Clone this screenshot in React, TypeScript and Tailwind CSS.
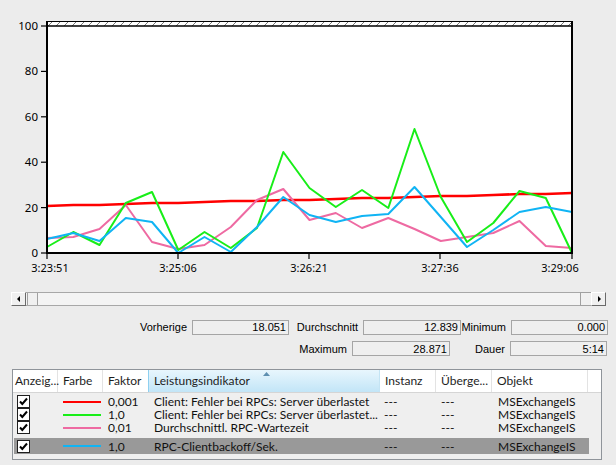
import React from 'react';

const X0 = 47;
const STEP = 26.25;

const green = [247, 232, 245, 203, 192, 250, 232, 248, 228, 152, 188, 207, 190, 208, 129, 197, 242, 223, 191, 198, 253];
const blue = [239, 233, 241, 218, 222, 253, 237, 252, 227, 197, 215, 222, 216, 214, 187, 217, 247, 230, 212, 207, 212];
const pink = [238, 237, 229, 205, 242, 249, 245, 227, 200, 189, 220, 213, 228, 218, 229, 241, 237, 233, 221, 246, 248];
const red = green.map((_, k) => Math.round(206 - (13 * k) / 20));

const pts = (ys: number[]) => ys.map((y, k) => `${(X0 + k * STEP).toFixed(1)},${y}`).join(' ');

const yTicks = [
  { v: '100', y: 26 },
  { v: '80', y: 71.4 },
  { v: '60', y: 116.8 },
  { v: '40', y: 162.2 },
  { v: '20', y: 207.6 },
  { v: '0', y: 253 },
];

const xTicks = [
  { t: '3:23:51', x: 47, lx: 50 },
  { t: '3:25:06', x: 178, lx: 178 },
  { t: '3:26:21', x: 309, lx: 309 },
  { t: '3:27:36', x: 440, lx: 440 },
  { t: '3:29:06', x: 572, lx: 560 },
];

const Chart = () => (
  <svg width="616" height="284" className="block" style={{ fontFamily: '"Noto Sans", sans-serif' }}>
    <defs>
      <pattern id="hatch" width="8" height="5" patternUnits="userSpaceOnUse" x="47" y="21">
        <line x1="1" y1="5" x2="6" y2="0" stroke="#555" strokeWidth="0.8" />
      </pattern>
    </defs>
    <rect x="47" y="21" width="525" height="232" fill="#fff" />
    <rect x="47" y="21" width="525" height="5" fill="url(#hatch)" />
    <line x1="47" y1="21.5" x2="572" y2="21.5" stroke="#000" strokeWidth="1" />
    <line x1="47" y1="26" x2="572" y2="26" stroke="#000" strokeWidth="1.5" />

    {yTicks.map((t) => (
      <g key={t.v}>
        <line x1="41" y1={t.y} x2="47" y2={t.y} stroke="#000" strokeWidth="1.2" />
        <text x="38" y={t.y + 4} textAnchor="end" fontSize="11.5" fill="#000">
          {t.v}
        </text>
      </g>
    ))}
    {xTicks.map((t) => (
      <g key={t.t}>
        <line x1={t.x} y1="253" x2={t.x} y2="259" stroke="#000" strokeWidth="1.2" />
        <text x={t.lx} y="272" textAnchor="middle" fontSize="11" fill="#000">
          {t.t}
        </text>
      </g>
    ))}

    <polyline points={pts(red)} fill="none" stroke="#ff0000" strokeWidth="2.6" />
    <polyline points={pts(pink)} fill="none" stroke="#ee6aa2" strokeWidth="2" strokeLinejoin="round" />
    <polyline points={pts(green)} fill="none" stroke="#18ee18" strokeWidth="2" strokeLinejoin="round" />
    <polyline points={pts(blue)} fill="none" stroke="#10b4f4" strokeWidth="2" strokeLinejoin="round" />

    <line x1="47" y1="21" x2="47" y2="254" stroke="#000" strokeWidth="2" />
    <line x1="572" y1="21" x2="572" y2="254" stroke="#000" strokeWidth="2" />
    <line x1="46" y1="253" x2="573" y2="253" stroke="#000" strokeWidth="2" />
  </svg>
);

const ScrollBtn = ({ dir }: { dir: 'l' | 'r' }) => (
  <div className="flex h-[14px] w-[15px] items-center justify-center border-t border-l border-t-white border-l-white border-b border-r border-b-[#6a6a6a] border-r-[#6a6a6a] bg-[#f0f0f0]">
    <svg width="4" height="6">
      {dir === 'l' ? <polygon points="3,0 3,6 0,3" fill="#000" /> : <polygon points="1,0 1,6 4,3" fill="#000" />}
    </svg>
  </div>
);

const Scrollbar = () => (
  <div className="mx-[11px] flex h-[14px] w-[595px]">
    <ScrollBtn dir="l" />
    <div className="flex flex-1 border-y border-[#a8a8a8] bg-[#f4f4f4]">
      <div className="ml-[1px] h-full w-[11px] border-r border-l border-[#a0a0a0] bg-[#f0f0f0]" />
    </div>
    <div className="flex h-[14px] w-[11px] border-y border-l border-[#a0a0a0] bg-[#f0f0f0]" />
    <ScrollBtn dir="r" />
  </div>
);

const StatBox = ({ value, w }: { value: string; w: string }) => (
  <div className={`flex h-[15px] items-center justify-end border border-[#a5a5a5] bg-[#efefef] pr-[2px] ${w}`}>
    {value}
  </div>
);

const Stats = () => (
  <div className="mt-[13px] flex flex-col gap-[5px] text-[11px] text-black" style={{ fontFamily: '"Liberation Sans", Arial, sans-serif' }}>
    <div className="flex items-center">
      <div className="w-[187px] text-right">Vorherige</div>
      <div className="w-[5px]" />
      <StatBox value="18.051" w="w-[97px]" />
      <div className="w-[69px] text-right">Durchschnitt</div>
      <div className="w-[5px]" />
      <StatBox value="12.839" w="w-[98px]" />
      <div className="w-[45px] text-right">Minimum</div>
      <div className="w-[5px]" />
      <StatBox value="0.000" w="w-[97px]" />
    </div>
    <div className="flex items-center">
      <div className="w-[347px] text-right">Maximum</div>
      <div className="w-[5px]" />
      <StatBox value="28.871" w="w-[98px]" />
      <div className="w-[55px] text-right">Dauer</div>
      <div className="w-[5px]" />
      <StatBox value="5:14" w="w-[97px]" />
    </div>
  </div>
);

const Check = () => (
  <div className="flex h-[13px] w-[13px] items-center justify-center border border-[#1f1f1f] bg-white">
    <svg width="11" height="11" viewBox="0 0 11 11">
      <path d="M2 5.5 L4.3 8 L9 2.5" fill="none" stroke="#000" strokeWidth="2" />
    </svg>
  </div>
);

const rows = [
  { color: '#ff0000', f: '0,001', name: 'Client: Fehler bei RPCs: Server überlastet', sel: false },
  { color: '#18ee18', f: '1,0', name: 'Client: Fehler bei RPCs: Server überlastet...', sel: false },
  { color: '#ee6aa2', f: '0,01', name: 'Durchschnittl. RPC-Wartezeit', sel: false },
  { color: '#10b4f4', f: '1,0', name: 'RPC-Clientbackoff/Sek.', sel: true },
];

const Table = () => (
  <div className="mx-[12px] mt-[12px] h-[91px] w-[590px] border border-[#8f949a] bg-[#efefef] text-[12px] text-[#111]" style={{ fontFamily: 'Lato, "Noto Sans", sans-serif' }}>
    <div className="flex h-[23px] border-b border-[#d5d5d5] bg-white text-[#1e1e1e]">
      <div className="flex w-[45px] items-center border-r border-[#e3e3e3] pl-[2px]">Anzeig...</div>
      <div className="flex w-[45px] items-center border-r border-[#e3e3e3] pl-[5px]">Farbe</div>
      <div className="flex w-[45px] items-center pl-[5px]">Faktor</div>
      <div className="relative flex w-[232px] items-center border-l border-r border-l-[#8fd0f0] border-r-[#c4e4f4] bg-gradient-to-b from-[#e8f6fd] to-[#c2e5f7] pl-[5px]">
        Leistungsindikator
        <svg className="absolute left-[114px] top-[2px]" width="7" height="4">
          <polygon points="0,4 3.5,0 7,4" fill="#5e8fb0" />
        </svg>
      </div>
      <div className="flex w-[56px] items-center border-r border-[#e3e3e3] pl-[5px]">Instanz</div>
      <div className="flex w-[56px] items-center border-r border-[#e3e3e3] pl-[5px]">Überge...</div>
      <div className="flex w-[96px] items-center border-r border-[#e3e3e3] pl-[5px]">Objekt</div>
    </div>
    <div className="mt-[2px] flex flex-col leading-[13px]">
      {rows.map((r) => (
        <div
          key={r.name}
          className={`flex w-[575px] items-center ${r.sel ? 'mt-[4px] ml-[1px] h-[16px] bg-[#999999]' : 'h-[13px]'}`}
        >
          <div className={`flex h-full items-center ${r.sel ? 'w-[44px] pl-[3px]' : 'w-[45px] pl-[4px]'}`}>
            <Check />
          </div>
          <div className="flex w-[45px] items-center pl-[5px]">
            <div className="h-[2px] w-[38px]" style={{ backgroundColor: r.color }} />
          </div>
          <div className="w-[45px] pl-[5px]">{r.f}</div>
          <div className="w-[232px] truncate pl-[6px]">{r.name}</div>
          <div className="w-[56px] pl-[4px]">---</div>
          <div className="w-[56px] pl-[5px]">---</div>
          <div className="w-[96px] pl-[6px]">MSExchangeIS</div>
        </div>
      ))}
    </div>
  </div>
);

export default function App() {
  return (
    <div className="h-[465px] w-[616px] overflow-hidden bg-[#ececec]">
      <Chart />
      <div className="h-[8px]" />
      <Scrollbar />
      <Stats />
      <Table />
    </div>
  );
}
